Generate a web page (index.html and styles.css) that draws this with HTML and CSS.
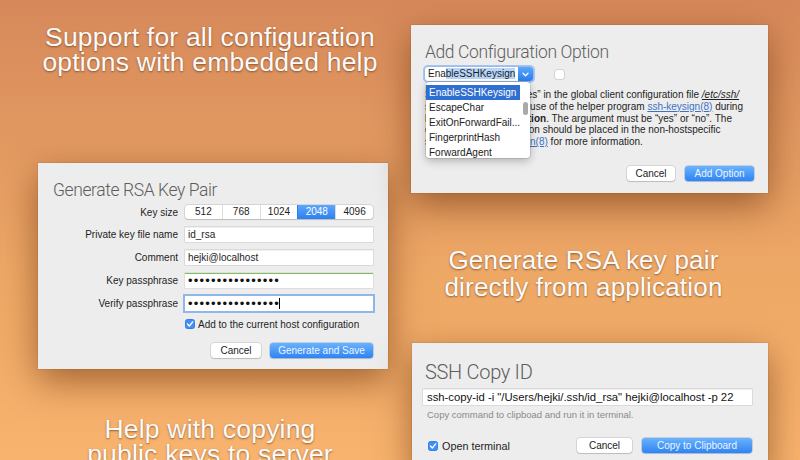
FILE: index.html
```html
<!DOCTYPE html>
<html>
<head>
<meta charset="utf-8">
<title>SSH Config</title>
<link rel="stylesheet" href="styles.css">
</head>
<body>
<div class="canvas">
  <div class="col col-left">
    <h2 class="promo promo-1">Support for all configuration<br>options with embedded help</h2>

    <section class="dialog dlg-rsa">
      <h1 class="dlg-title">Generate RSA Key Pair</h1>
      <div class="form">
        <span class="lbl">Key size</span>
        <div class="seg">
          <span>512</span><span>768</span><span>1024</span><span class="on">2048</span><span>4096</span>
        </div>
        <span class="lbl">Private key file name</span>
        <div class="field">id_rsa</div>
        <span class="lbl">Comment</span>
        <div class="field">hejki@localhost</div>
        <span class="lbl">Key passphrase</span>
        <div class="field good"><span class="dots">••••••••••••••••</span></div>
        <span class="lbl">Verify passphrase</span>
        <div class="field focus"><span class="dots">••••••••••••••••</span><span class="caret"></span></div>
        <span></span>
        <div class="check-row">
          <svg class="cb" width="10" height="10" viewBox="0 0 10 10"><rect x="0.5" y="0.5" width="9" height="9" rx="2" fill="#3f8ff5" stroke="#2f7fe6"/><path d="M2.4 5.1 L4.3 7 L7.7 2.9" fill="none" stroke="#fff" stroke-width="1.4" stroke-linecap="round" stroke-linejoin="round"/></svg>
          <span>Add to the current host configuration</span>
        </div>
      </div>
      <div class="btns">
        <button class="btn w-cancel">Cancel</button>
        <button class="btn primary w-gen">Generate and Save</button>
      </div>
    </section>

    <h2 class="promo promo-3">Help with copying<br>public keys to server</h2>
  </div>

  <div class="col col-right">
    <section class="dialog dlg-opt">
      <h1 class="dlg-title">Add Configuration Option</h1>
      <div class="combo-row">
        <div class="combo">
          <span class="combo-text">Ena<span class="sel">bleSSHKeysign</span></span>
          <span class="combo-btn"><svg width="7" height="5" viewBox="0 0 7 5"><path d="M1 1.2 L3.5 3.7 L6 1.2" stroke="#fff" fill="none" stroke-width="1.3" stroke-linecap="round" stroke-linejoin="round"/></svg></span>
        </div>
        <span class="box"></span>
      </div>
      <p class="help">Setting this option to “yes” in the global client configuration file <a class="path">/etc/ssh/</a><br>ssh_config enables the use of the helper program <a>ssh-keysign(8)</a> during<br><b>HostbasedAuthentication</b>. The argument must be “yes” or “no”. The<br>default is “no”. This option should be placed in the non-hostspecific<br>section. See <a>ssh-keysign(8)</a> for more information.</p>
      <div class="btns">
        <button class="btn w-cancel2">Cancel</button>
        <button class="btn primary w-add">Add Option</button>
      </div>
      <ul class="dropdown">
        <li class="hl">EnableSSHKeysign</li>
        <li>EscapeChar</li>
        <li>ExitOnForwardFail...</li>
        <li>FingerprintHash</li>
        <li>ForwardAgent</li>
        <li class="thumb"></li>
      </ul>
    </section>

    <h2 class="promo promo-2">Generate RSA key pair<br>directly from application</h2>

    <section class="dialog dlg-copy">
      <h1 class="dlg-title">SSH Copy ID</h1>
      <div class="field cmd">ssh-copy-id -i "/Users/hejki/.ssh/id_rsa" hejki@localhost -p 22</div>
      <p class="hint">Copy command to clipboad and run it in terminal.</p>
      <div class="copy-row">
        <div class="check-row">
          <svg class="cb" width="10" height="10" viewBox="0 0 10 10"><rect x="0.5" y="0.5" width="9" height="9" rx="2" fill="#3f8ff5" stroke="#2f7fe6"/><path d="M2.4 5.1 L4.3 7 L7.7 2.9" fill="none" stroke="#fff" stroke-width="1.4" stroke-linecap="round" stroke-linejoin="round"/></svg>
          <span>Open terminal</span>
        </div>
        <div class="btns inline">
          <button class="btn w-cancel3">Cancel</button>
          <button class="btn primary w-copy">Copy to Clipboard</button>
        </div>
      </div>
    </section>
  </div>
</div>
</body>
</html>
```

FILE: styles.css
```css
* { box-sizing: border-box; }
html, body { margin: 0; padding: 0; }
body { width: 800px; height: 460px; overflow: hidden; }

.canvas {
  width: 800px;
  height: 460px;
  overflow: hidden;
  display: flex;
  align-items: flex-start;
  gap: 23px;
  padding-left: 38px;
  background: linear-gradient(180deg, #d6885a 0%, #e29961 30%, #eea866 60%, #f8b36e 100%);
}

.col { display: flex; flex-direction: column; }
.col-left { width: 350px; }
.col-right { width: 357px; }

.promo {
  margin: 0;
  font-family: "Liberation Sans", Arial, sans-serif;
  font-weight: 400;
  font-size: 26.5px;
  letter-spacing: 0.2px;
  line-height: 25px;
  color: #fbfbfb;
  text-align: center;
  text-shadow: 0 1px 2px rgba(70, 30, 0, 0.55);
  white-space: nowrap;
}
.promo-1 { margin-top: 25px; margin-left: -6px; }
.promo-3 { margin-top: 48px; margin-left: -6px; }
.promo-2 { margin-top: 54px; font-size: 26px; line-height: 27px; margin-right: 12px; }

.dialog {
  position: relative;
  background: #ededed;
  box-shadow: 0 12px 34px rgba(95, 40, 5, 0.55), 0 0 0 0.5px rgba(0, 0, 0, 0.12);
  font-family: "Liberation Sans", Arial, sans-serif;
  font-size: 10px;
  color: #1e1e1e;
}

.dlg-title {
  margin: 0;
  font-family: Roboto, "Liberation Sans", sans-serif;
  font-weight: 300;
  font-size: 17.5px;
  letter-spacing: -0.4px;
  line-height: 20px;
  color: #5e5e5e;
  white-space: nowrap;
}

/* ---------- Generate RSA ---------- */
.dlg-rsa {
  margin-top: 88px;
  height: 206px;
  padding: 17px 15px 0 15px;
}
.form {
  margin-top: 5px;
  display: grid;
  grid-template-columns: 125px 188px;
  column-gap: 7px;
  row-gap: 8px;
  align-items: center;
}
.lbl { text-align: right; white-space: nowrap; }

.seg {
  display: flex;
  height: 14px;
  background: #fff;
  border-radius: 3px;
  box-shadow: 0 0 0 0.5px rgba(0, 0, 0, 0.2), 0 1px 1px rgba(0, 0, 0, 0.12);
  overflow: hidden;
}
.seg span {
  flex: 1;
  text-align: center;
  line-height: 14px;
  border-left: 1px solid #dcdcdc;
}
.seg span:first-child { border-left: none; }
.seg span.on {
  background: linear-gradient(180deg, #5ba7fa, #2c80f1);
  color: #fff;
  border-left-color: #2c80f1;
}

.field {
  height: 15px;
  line-height: 15px;
  padding-left: 3px;
  background: #fff;
  box-shadow: 0 0 0 0.5px rgba(0, 0, 0, 0.16), inset 0 0.5px 0 rgba(0, 0, 0, 0.12);
  white-space: nowrap;
  overflow: hidden;
  display: flex;
  align-items: center;
}
.field.good { box-shadow: 0 0 0 0.5px rgba(0, 0, 0, 0.12), inset 0 1px 0 #80c05a; }
.field.focus { box-shadow: 0 0 0 2px #8fb7ea, 0 0 0 0.5px rgba(0, 0, 0, 0.2); }
.dots { font-size: 13px; letter-spacing: 1.2px; line-height: 15px; color: #111; }
.caret { display: inline-block; width: 1px; height: 11px; background: #000; margin-left: -1px; }

.check-row { display: flex; align-items: center; gap: 3px; height: 10px; white-space: nowrap; }
.cb { display: block; flex: none; }

.btns { display: flex; justify-content: flex-end; gap: 9px; }
.dlg-rsa .btns { margin-top: 14px; }
.btn {
  height: 15px;
  padding: 0;
  border: none;
  border-radius: 3px;
  background: #fff;
  box-shadow: 0 0 0 0.5px rgba(0, 0, 0, 0.2), 0 1px 1px rgba(0, 0, 0, 0.12);
  font-family: "Liberation Sans", Arial, sans-serif;
  font-size: 10px;
  color: #222;
  line-height: 15px;
}
.btn.primary {
  background: linear-gradient(180deg, #6ab2fb, #2f84f3);
  color: #eef5ff;
  box-shadow: 0 0 0 0.5px rgba(20, 90, 200, 0.4), 0 1px 1px rgba(0, 0, 0, 0.12);
}
.w-cancel { width: 50px; }
.w-gen { width: 103px; }

/* ---------- Add Configuration Option ---------- */
.dlg-opt {
  margin-top: 25px;
  height: 168px;
  padding: 17px 14px 0 14px;
}
.combo-row { display: flex; align-items: center; margin-top: 5px; height: 14px; }
.combo {
  width: 108px;
  height: 14px;
  display: flex;
  background: #fff;
  border-radius: 3px;
  box-shadow: 0 0 0 2px rgba(120, 170, 240, 0.6), 0 0 0 0.5px rgba(0, 0, 0, 0.2);
}
.combo-text { flex: 1; padding-left: 3px; line-height: 14px; white-space: nowrap; }
.sel { background: #b6d5fb; }
.combo-btn {
  width: 15px;
  height: 14px;
  border-radius: 0 3px 3px 0;
  background: linear-gradient(180deg, #5ba7fa, #2a7ef0);
  display: flex;
  align-items: center;
  justify-content: center;
}
.combo-btn svg { display: block; }
.box {
  width: 9px;
  height: 9px;
  margin-left: 22px;
  background: #fff;
  border-radius: 2px;
  box-shadow: 0 0 0 0.5px rgba(0, 0, 0, 0.22);
}

.help {
  margin: 8px 0 0 0;
  line-height: 11.8px;
  white-space: nowrap;
  color: #1e1e1e;
}
.help a { color: #3b72c6; text-decoration: underline; }
.help a.path { color: #1e1e1e; font-style: italic; }
.help b { font-weight: 700; }
.dlg-opt .btns { margin-top: 18px; gap: 10px; }
.w-cancel2 { width: 48px; }
.w-add { width: 69px; }

.dropdown {
  position: absolute;
  left: 15px;
  top: 57px;
  width: 104px;
  height: 76px;
  margin: 0;
  padding: 3px 0 0 0;
  list-style: none;
  background: #fff;
  border-radius: 3px;
  box-shadow: 0 0 0 0.5px rgba(0, 0, 0, 0.2), 0 3px 8px rgba(0, 0, 0, 0.25);
}
.dropdown li {
  height: 15px;
  line-height: 15px;
  padding-left: 3px;
  width: 94px;
  white-space: nowrap;
  color: #222;
}
.dropdown li.hl { background: #2f6fd1; color: #fff; }
.dropdown li.thumb {
  position: absolute;
  right: 2px;
  top: 20px;
  width: 5px;
  height: 13px;
  padding: 0;
  border-radius: 3px;
  background: #a9a9a9;
}

/* ---------- SSH Copy ID ---------- */
.dlg-copy {
  margin-top: 42px;
  margin-left: 1px;
  width: 356px;
  height: 130px;
  padding: 19px 16px 0 11px;
}
.dlg-copy .dlg-title { padding-left: 2px; font-size: 20px; letter-spacing: -0.3px; }
.field.cmd {
  margin-top: 7px;
  height: 16px;
  font-size: 11.3px;
  padding-left: 4px;
  color: #111;
}
.hint {
  margin: 4px 0 0 4px;
  font-size: 9.5px;
  line-height: 12px;
  color: #8a8a8a;
  white-space: nowrap;
}
.copy-row {
  margin-top: 17px;
  display: flex;
  align-items: center;
  justify-content: space-between;
  padding-left: 5px;
}
.copy-row .check-row { font-size: 10.8px; gap: 4px; }
.btns.inline { gap: 10px; }
.w-cancel3 { width: 55px; }
.w-copy { width: 110px; }
```
